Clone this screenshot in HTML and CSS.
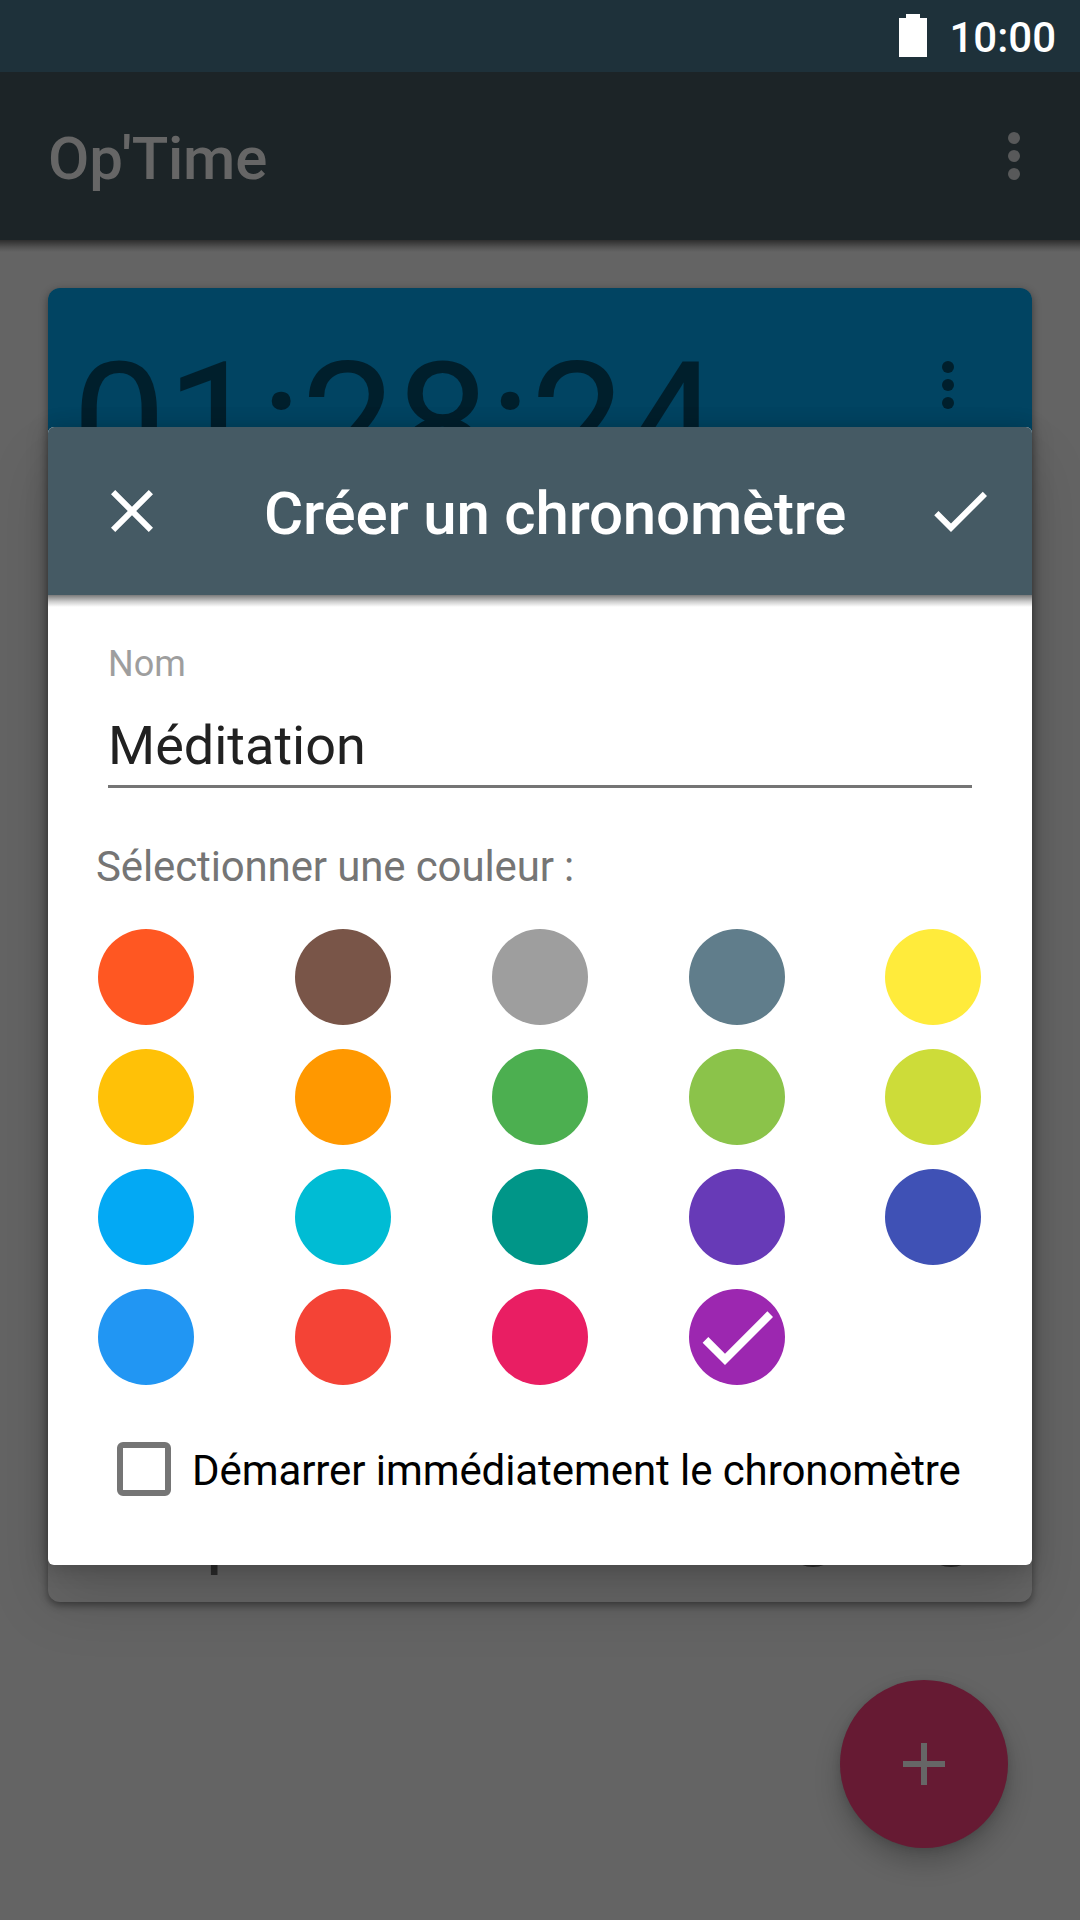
FILE: index.html
```html
<!DOCTYPE html>
<html lang="fr">
<head>
<meta charset="utf-8">
<title>Op'Time</title>
<link rel="stylesheet" href="styles.css">
</head>
<body>
<div class="screen">
  <header class="status-bar">
    <svg class="battery" viewBox="0 0 28 43"><path d="M7 0h14v4h7v39H0V4h7z"/></svg>
    <span class="clock">10:00</span>
  </header>
  <div class="toolbar">
    <h1 class="app-title">Op'Time</h1>
    <svg class="icon" viewBox="0 0 24 24"><circle cx="12" cy="6" r="2"/><circle cx="12" cy="12" r="2"/><circle cx="12" cy="18" r="2"/></svg>
  </div>
  <main class="content">
    <section class="card">
      <div class="card-head">
        <span class="time">01:28:24</span>
        <svg class="icon" viewBox="0 0 24 24"><circle cx="12" cy="6" r="2"/><circle cx="12" cy="12" r="2"/><circle cx="12" cy="18" r="2"/></svg>
      </div>
      <div class="card-foot">
        <span class="card-name">p</span>
        <svg class="icon" viewBox="0 0 24 24"><circle cx="12" cy="12" r="10"/></svg>
        <svg class="icon" viewBox="0 0 24 24"><circle cx="12" cy="12" r="10"/></svg>
      </div>
    </section>
  </main>
  <button class="fab"><svg class="icon" viewBox="0 0 24 24"><path d="M11 5h2v6h6v2h-6v6h-2v-6H5v-2h6z"/></svg></button>

  <div class="dialog">
    <div class="dialog-bar">
      <svg class="icon" viewBox="0 0 24 24"><path d="M19 6.41L17.59 5 12 10.59 6.41 5 5 6.41 10.59 12 5 17.59 6.41 19 12 13.41 17.59 19 19 17.59 13.41 12z"/></svg>
      <h2 class="dialog-title">Créer un chronomètre</h2>
      <svg class="icon" viewBox="0 0 24 24"><path d="M9 16.17L4.83 12l-1.42 1.41L9 19 21 7l-1.41-1.41z"/></svg>
    </div>
    <div class="dialog-body">
      <div class="field">
        <span class="field-label">Nom</span>
        <span class="field-value">Méditation</span>
      </div>
      <p class="prompt">Sélectionner une couleur :</p>
      <div class="swatches">
        <i class="swatch deep-orange"></i><i class="swatch brown"></i><i class="swatch grey"></i><i class="swatch blue-grey"></i><i class="swatch yellow"></i>
        <i class="swatch amber"></i><i class="swatch orange"></i><i class="swatch green"></i><i class="swatch light-green"></i><i class="swatch lime"></i>
        <i class="swatch light-blue"></i><i class="swatch cyan"></i><i class="swatch teal"></i><i class="swatch deep-purple"></i><i class="swatch indigo"></i>
        <i class="swatch blue"></i><i class="swatch red"></i><i class="swatch pink"></i>
        <i class="swatch purple"><svg viewBox="0 0 24 24"><path d="M9 16.17L4.83 12l-1.42 1.41L9 19 21 7l-1.41-1.41z"/></svg></i>
      </div>
      <div class="option">
        <span class="checkbox"></span>
        <span class="option-label">Démarrer immédiatement le chronomètre</span>
      </div>
    </div>
  </div>
</div>
</body>
</html>
```
FILE: styles.css
```css
* { box-sizing: border-box; }
body { margin: 0; font-family: Roboto, "Noto Sans", sans-serif; }
h1, h2, p { margin: 0; }
svg { display: block; fill: currentColor; }

.screen {
  position: relative;
  display: flex;
  flex-direction: column;
  width: 1080px;
  height: 1920px;
  overflow: hidden;
  background: #646464;
}
.icon { flex: none; width: 72px; height: 72px; }

.status-bar {
  display: flex;
  align-items: flex-start;
  justify-content: flex-end;
  gap: 22px;
  height: 72px;
  padding: 14px 24px 0 0;
  background: #1e313a;
  color: #fff;
  font-size: 42px;
  font-weight: 500;
}
.clock { line-height: 48px; }
.battery { width: 28px; height: 43px; }

.toolbar {
  z-index: 1;
  display: flex;
  align-items: center;
  justify-content: space-between;
  height: 168px;
  padding: 0 30px 0 48px;
  background: #1c2427;
  color: #58595a;
}
.toolbar::after, .dialog-bar::after {
  content: "";
  position: absolute;
  left: 0;
  right: 0;
  height: 12px;
}
.toolbar::after {
  top: 240px;
  background: linear-gradient(rgba(0,0,0,.55), rgba(0,0,0,.18) 60%, transparent);
}
.app-title { font-size: 60px; font-weight: 500; line-height: 70px; letter-spacing: -.2px; padding-top: 5px; color: #666; }

.content { padding: 48px; }
.card {
  display: flex;
  flex-direction: column;
  justify-content: space-between;
  height: 1314px;
  border-radius: 12px;
  overflow: hidden;
  background: #666;
  box-shadow: 0 3px 8px rgba(0,0,0,.45);
  color: #001f2c;
}
.card-head {
  display: flex;
  align-items: flex-start;
  justify-content: space-between;
  height: 280px;
  padding: 34px 48px 0 24px;
  background: #014462;
}
.card-head .icon { margin-top: 27px; }
.time { font-size: 168px; line-height: 196px; letter-spacing: -.1px; margin-top: 5px; }
.card-foot {
  display: flex;
  align-items: flex-end;
  gap: 66px;
  padding: 0 45px 29px 158px;
  color: #2b2b2b;
}
.card-name { flex: 1; font-size: 72px; line-height: 72px; margin-bottom: 1px; }

.fab {
  position: absolute;
  left: 840px;
  top: 1680px;
  display: grid;
  place-items: center;
  width: 168px;
  height: 168px;
  padding: 0;
  border: 0;
  border-radius: 50%;
  background: #661a33;
  color: #666;
  box-shadow: 0 14px 26px rgba(0,0,0,.22), 0 2px 8px rgba(0,0,0,.12);
}

.dialog {
  position: absolute;
  z-index: 2;
  left: 48px;
  top: 427px;
  width: 984px;
  height: 1138px;
  border-radius: 6px;
  overflow: hidden;
  background: #fff;
  box-shadow: 0 36px 60px rgba(0,0,0,.15), 0 2px 22px rgba(0,0,0,.22);
}
.dialog-bar {
  display: flex;
  align-items: center;
  height: 168px;
  padding: 0 36px 0 48px;
  background: #455a64;
  color: #fff;
}
.dialog-bar::after {
  top: 168px;
  background: linear-gradient(rgba(0,0,0,.52), rgba(0,0,0,.2) 55%, transparent);
}
.dialog-title { flex: 1; font-size: 60px; font-weight: 500; line-height: 70px; letter-spacing: -.17px; padding: 5px 0 0 96px; }

.field {
  display: flex;
  flex-direction: column;
  height: 193px;
  margin: 0 60px;
  padding-top: 48px;
  border-bottom: 3px solid #757575;
}
.field-label { font-size: 36px; line-height: 42px; color: #9e9e9e; }
.field-value { font-size: 54px; line-height: 64px; margin-top: 29px; color: #212121; }
.prompt { margin: 54px 48px 0; font-size: 42px; line-height: 50px; letter-spacing: -.13px; color: #757575; }

.swatches {
  display: grid;
  grid-template-columns: 197px 197px 197px 196px 96px;
  row-gap: 24px;
  margin-top: 37px;
  padding-left: 50px;
}
.swatch { width: 96px; height: 96px; border-radius: 50%; color: #fff; }
.deep-orange { background: #ff5722; }
.brown { background: #795548; }
.grey { background: #9e9e9e; }
.blue-grey { background: #607d8b; }
.yellow { background: #ffeb3b; }
.amber { background: #ffc107; }
.orange { background: #ff9800; }
.green { background: #4caf50; }
.light-green { background: #8bc34a; }
.lime { background: #cddc39; }
.light-blue { background: #03a9f4; }
.cyan { background: #00bcd4; }
.teal { background: #009688; }
.deep-purple { background: #673ab7; }
.indigo { background: #3f51b5; }
.blue { background: #2196f3; }
.red { background: #f44336; }
.pink { background: #e91e63; }
.purple { background: #9c27b0; }

.option {
  display: flex;
  align-items: flex-start;
  gap: 21px;
  margin: 57px 0 0 69px;
  font-size: 42px;
  color: #000;
  white-space: nowrap;
}
.option-label { line-height: 50px; letter-spacing: -.08px; padding-top: 4px; }
.checkbox { width: 54px; height: 54px; border: 6px solid #757575; border-radius: 6px; }
```
